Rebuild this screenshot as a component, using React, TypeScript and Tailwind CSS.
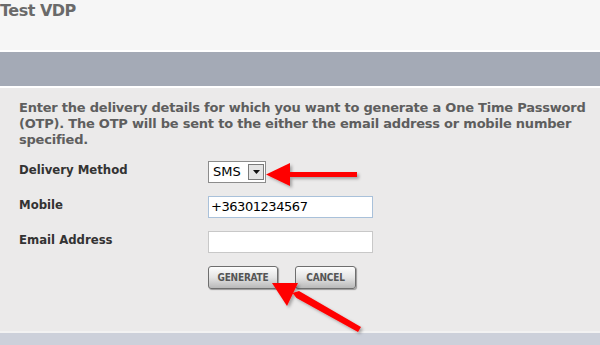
import React from "react";

export default function App() {
  const font = { fontFamily: '"DejaVu Sans", Verdana, sans-serif' };
  const cond = { fontFamily: '"DejaVu Sans Condensed", "DejaVu Sans", sans-serif' };
  return (
    <div className="relative w-[600px] h-[345px] overflow-hidden bg-white" style={font}>
      <div className="h-[50px] bg-[#f6f6f6]">
        <div className="text-[16px] font-bold leading-[21px] text-[#6a6a6a] tracking-[-0.5px]">Test VDP</div>
      </div>
      <div className="h-[2px] bg-white" />
      <div className="h-[34px] bg-[#a4aab6]" />
      <div className="h-[2px] bg-white" />
      <div className="h-[243px] bg-[#ebeaea] pl-[19px] pt-[12px]">
        <p className="text-[13px] font-bold leading-[16px] text-[#5e5e5e] w-[578px] tracking-[-0.22px]">
          Enter the delivery details for which you want to generate a One Time Password (OTP). The OTP will be sent to the either the email address or mobile number specified.
        </p>
        <div className="mt-[13px] flex flex-col gap-[13px]">
          <div className="flex items-start h-[22px]">
            <div className="w-[189px] pt-[1px] text-[13px] font-bold text-[#333] leading-[16px]" style={cond}>Delivery Method</div>
            <div className="w-[58px] h-[22px] border border-[#8c8c8c] bg-white flex items-center justify-between pl-[4px] pr-[1px]">
              <span className="text-[13px] text-black leading-[16px]">SMS</span>
              <div className="w-[16px] h-[16px] border border-[#7a7a7a] bg-[#e4e4e4] flex items-center justify-center">
                <svg width="7" height="4" viewBox="0 0 7 4"><polygon points="0,0 7,0 3.5,4" fill="#111" /></svg>
              </div>
            </div>
          </div>
          <div className="flex items-start h-[22px]">
            <div className="w-[189px] pt-[1px] text-[13px] font-bold text-[#333] leading-[16px]" style={cond}>Mobile</div>
            <div className="w-[165px] h-[22px] border border-[#a9c1da] bg-white flex items-center pl-[2px]">
              <span className="text-[13px] text-black leading-[16px] tracking-[-0.45px]">+36301234567</span>
            </div>
          </div>
          <div className="flex items-start h-[22px]">
            <div className="w-[189px] pt-[1px] text-[13px] font-bold text-[#333] leading-[16px]" style={cond}>Email Address</div>
            <div className="w-[165px] h-[22px] border border-[#c8c8c8] bg-white" />
          </div>
          <div className="flex items-start pl-[189px] gap-[17px]">
            <button className="w-[70px] h-[23px] rounded-[3px] border border-[#6e6e6e] bg-gradient-to-b from-[#fdfdfd] via-[#e4e4e4] to-[#b9b9b9] shadow-[1px_1px_1px_rgba(0,0,0,0.35)] text-[10px] font-bold text-[#555] tracking-[-0.2px]" style={cond}>
              GENERATE
            </button>
            <button className="w-[61px] h-[23px] rounded-[3px] border border-[#6e6e6e] bg-gradient-to-b from-[#fdfdfd] via-[#e4e4e4] to-[#b9b9b9] shadow-[1px_1px_1px_rgba(0,0,0,0.35)] text-[10px] font-bold text-[#555] tracking-[-0.2px]" style={cond}>
              CANCEL
            </button>
          </div>
        </div>
      </div>
      <div className="h-[2px] bg-[#f2f2f2]" />
      <div className="h-[12px] bg-[#ccd0da]" />

      <svg className="absolute left-0 top-0 pointer-events-none" width="600" height="345" viewBox="0 0 600 345">
        <defs>
          <filter id="sh" x="-20%" y="-20%" width="140%" height="140%">
            <feDropShadow dx="2" dy="2" stdDeviation="1.5" floodColor="#000" floodOpacity="0.3" />
          </filter>
        </defs>
        <g filter="url(#sh)" fill="#ff0000">
          <rect x="287" y="172" width="70" height="5" />
          <polygon points="266,174.5 290,163 290,186" />
          <polygon points="292.5,293 296.5,298 358,332 361,327 299,291" />
          <polygon points="272,283 298,283 287,306" />
        </g>
      </svg>
    </div>
  );
}
